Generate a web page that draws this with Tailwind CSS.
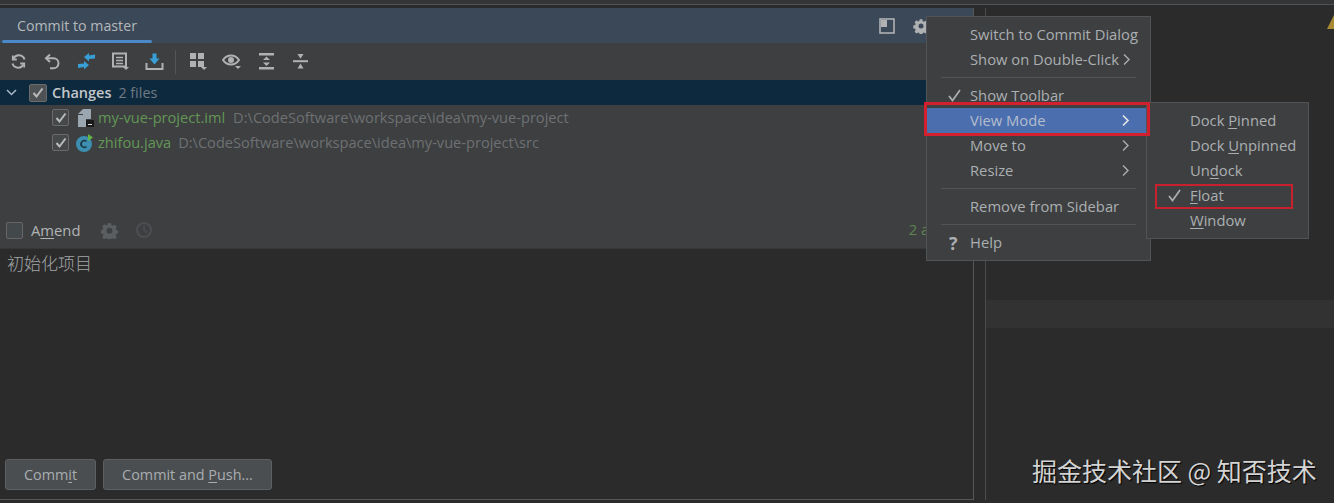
<!DOCTYPE html>
<html>
<head>
<meta charset="utf-8">
<script src="https://cdn.jsdelivr.net/npm/@tailwindcss/browser@4"></script>
</head>
<body class="m-0 bg-[#2b2b2b]">
<div class="relative w-[1334px] h-[503px] overflow-hidden bg-[#2b2b2b] text-[14.6px] text-[#a9adb0] font-['Open_Sans','Noto_Sans_CJK_SC',sans-serif]">
  <div class="h-[5px] bg-[#333537] border-b border-[#505254]"></div>
  <div class="flex h-[495px] pt-[3px]">
    <!-- left commit panel -->
    <section class="flex flex-col w-[974px] h-[492px] border-r border-b border-[#555759]">
      <header class="flex items-center h-[35px] bg-[#3b4858] shrink-0 relative">
        <span class="ml-[17px] mt-[1px] text-[14.2px] text-[#b4b8bb]">Commit to master</span>
        <div class="absolute left-[2px] right-[821px] bottom-0 h-[3px] rounded-full bg-[#4a88c7]"></div>
        <div class="ml-auto flex items-center gap-[18px] mr-[44px]">
          <svg width="16" height="16" viewBox="0 0 16 16" fill="none"><rect x="1" y="1" width="14" height="14" stroke="#afb1b3" stroke-width="1.6"/><rect x="2" y="2" width="6" height="7" fill="#afb1b3"/></svg>
          <svg width="16" height="16" viewBox="0 0 16 16"><path fill="#afb1b3" fill-rule="evenodd" d="M6.6 1h2.8l.4 2 1.3.6 1.8-1.1 2 2-1.1 1.8.5 1.3 2 .4v2.800l-2 .4-.5 1.300 1.100 1.800-2 2-1.800-1.100-1.300.5-.4 2H6.600l-.4-2-1.300-.5-1.800 1.100-2-2 1.100-1.800-.5-1.300-2-.4V7.600l2-.4.5-1.300-1.100-1.800 2-2 1.800 1.100 1.300-.6zM8 5.500a2.700 2.700 0 1 0 0 5.400 2.700 2.700 0 0 0 0-5.400z" transform="translate(0.6 0.4) scale(0.93)"/></svg>
        </div>
      </header>
      <div class="flex-1 flex flex-col bg-[#3e3f41]">
        <!-- toolbar -->
        <div class="flex items-center h-[37px] pl-[1px] shrink-0">
          <div class="flex items-center">
            <span class="flex justify-center w-[34px]"><svg width="17" height="17" viewBox="0 0 17 17" fill="none" stroke="#afb1b3" stroke-width="2"><path d="M14.500 6.500A6 6 0 0 0 3.500 5.500M2.500 10.500A6 6 0 0 0 13.500 11.500"/><path d="M2.800 2.500v4h4M14.200 14.500v-4h-4" stroke-width="1.800"/></svg></span>
            <span class="flex justify-center w-[34px]"><svg width="17" height="17" viewBox="0 0 17 17" fill="none" stroke="#afb1b3" stroke-width="2"><path d="M6 1.500 2 5.300l4 3.700"/><path d="M2.500 5.300h7a5 5 0 0 1 0 10H6"/></svg></span>
            <span class="flex justify-center w-[34px]"><svg width="19" height="19" viewBox="0 0 19 19" fill="#389fd6"><path d="M7 5 12 1V3.500L18 2.500V6.500L12 7V9.500ZM12 13 7 17.500V15L1 16V12L7 11.500V9Z"/></svg></span>
            <span class="flex justify-center w-[34px]"><svg width="19" height="19" viewBox="0 0 19 19" fill="none" stroke="#afb1b3"><path d="M2 1.500h13v13H2z" stroke-width="2"/><path d="M5 5.500h7M5 8.500h7M5 11.500h7" stroke-width="1.500"/><path d="M12 15h6l-3 3z" fill="#afb1b3" stroke="none"/></svg></span>
            <span class="flex justify-center w-[34px]"><svg width="19" height="19" viewBox="0 0 19 19" fill="none"><path d="M1.500 11v6h16v-6" stroke="#afb1b3" stroke-width="2"/><path d="M7.500 1.500h4v5h3l-5 6-5-6h3z" fill="#389fd6"/></svg></span>
          </div>
          <div class="w-px h-[24px] bg-[#515658] ml-[4px] mr-[5px]"></div>
          <div class="flex items-center">
            <span class="flex justify-center w-[34px]"><svg width="19" height="19" viewBox="0 0 19 19" fill="#afb1b3"><rect x="1" y="1" width="6" height="6"/><rect x="9" y="1" width="6" height="6"/><rect x="1" y="9" width="6" height="6"/><rect x="9" y="9" width="6" height="6"/><path d="M12 15h6l-3 3z"/></svg></span>
            <span class="flex justify-center w-[34px]"><svg width="20" height="19" viewBox="0 0 20 19" fill="none"><path d="M1 8c4-6 12-6 16 0-4 6-12 6-16 0z" stroke="#afb1b3" stroke-width="2"/><circle cx="9" cy="8" r="3" fill="#afb1b3"/><path d="M13 14h6l-3 3z" fill="#afb1b3"/></svg></span>
            <span class="flex justify-center w-[34px]"><svg width="17" height="17" viewBox="0 0 17 17" fill="#afb1b3"><rect x="1" y="0" width="15" height="2.500"/><rect x="1" y="14" width="15" height="2.500"/><path d="M8.500 3.500 12 7H5zM8.500 13 5 9.500h7z"/></svg></span>
            <span class="flex justify-center w-[34px]"><svg width="17" height="17" viewBox="0 0 17 17" fill="#afb1b3"><rect x="1" y="7.200" width="15" height="2"/><path d="M5.500 1h6L8.500 5.800zM8.500 10.600 11.500 15.500h-6z"/></svg></span>
          </div>
        </div>
        <!-- changes -->
        <div class="flex items-center h-[25px] bg-[#0d293e] shrink-0">
          <svg class="ml-[6px]" width="11" height="11" viewBox="0 0 11 11" fill="none" stroke="#a9b7c6" stroke-width="1.500"><path d="m1 3 4.500 4.500L10 3"/></svg>
          <span class="flex items-center justify-center ml-[12px] w-[18px] h-[18px] rounded-[2px] border border-[#6b6b6b] bg-[#4f5254]"><svg width="12" height="12" viewBox="0 0 12 12" fill="none" stroke="#bbbbbb" stroke-width="2"><path d="m1.500 6 3 3.500 6-8"/></svg></span>
          <span class="ml-[5px] text-[14.5px] font-semibold text-[#c4c7ca]">Changes</span>
          <span class="ml-[7px] text-[#6f7b85] text-[14.3px]">2 files</span>
        </div>
        <div class="flex items-center h-[25px] pl-[52px] shrink-0">
          <span class="flex items-center justify-center w-[17px] h-[17px] rounded-[2px] border border-[#6b6b6b] bg-[#45494a]"><svg width="12" height="12" viewBox="0 0 12 12" fill="none" stroke="#bbbbbb" stroke-width="2"><path d="m1.500 6 3 3.500 6-8"/></svg></span>
          <svg class="ml-[8px]" width="18" height="18" viewBox="0 0 18 18"><path d="M1 6h5V0h3v18H1z" fill="#9aa7b0"/><path d="M6 0v5H1z" fill="#9aa7b0"/><rect x="9" y="0" width="5" height="10" fill="#9aa7b0"/><rect x="9" y="11" width="8" height="7" fill="#1a1a1a"/><rect x="11" y="15" width="4" height="1" fill="#ddd"/></svg>
          <span class="ml-[3px] text-[#629755]">my-vue-project.iml</span>
          <span class="ml-[8px] text-[#6d7173]">D:\CodeSoftware\workspace\idea\my-vue-project</span>
        </div>
        <div class="flex items-center h-[25px] pl-[52px] shrink-0">
          <span class="flex items-center justify-center w-[17px] h-[17px] rounded-[2px] border border-[#6b6b6b] bg-[#45494a]"><svg width="12" height="12" viewBox="0 0 12 12" fill="none" stroke="#bbbbbb" stroke-width="2"><path d="m1.500 6 3 3.500 6-8"/></svg></span>
          <svg class="ml-[6px]" width="20" height="18" viewBox="0 0 20 18"><circle cx="9" cy="10" r="8" fill="#3c8fb0"/><path d="M11.500 7.500a3.300 3.300 0 1 0 0 5" fill="none" stroke="#1c3340" stroke-width="1.600"/><path d="M13 0l5 3.500-5 3.500z" fill="#62b543"/></svg>
          <span class="ml-[3px] text-[#629755]">zhifou.java</span>
          <span class="ml-[7px] text-[#6d7173]">D:\CodeSoftware\workspace\idea\my-vue-project\src</span>
        </div>
        <div class="flex-1"></div>
        <!-- amend -->
        <div class="flex items-center h-[31px] pl-[6px] pb-[6px] border-b border-[#353739] shrink-0">
          <span class="w-[17px] h-[17px] rounded-[2px] border border-[#666] bg-[#43494a]"></span>
          <span class="ml-[8px] text-[14.8px] text-[#b0b3b5]">A<span class="underline underline-offset-2">m</span>end</span>
          <svg class="ml-[20px]" width="17" height="17" viewBox="0 0 16 16"><path fill="#5a5e60" fill-rule="evenodd" d="M6.600 1h2.800l.4 2 1.300.6 1.800-1.100 2 2-1.100 1.800.5 1.300 2 .4v2.800l-2 .4-.5 1.300 1.100 1.800-2 2-1.800-1.100-1.300.5-.4 2H6.600l-.4-2-1.300-.5-1.800 1.100-2-2 1.100-1.800-.5-1.300-2-.4V7.600l2-.4.5-1.300-1.100-1.800 2-2 1.800 1.100 1.300-.6zM8 5.500a2.700 2.700 0 1 0 0 5.400 2.700 2.700 0 0 0 0-5.400z"/></svg>
          <svg class="ml-[17px]" width="18" height="18" viewBox="0 0 18 18" fill="none" stroke="#4c4f51" stroke-width="2"><circle cx="9" cy="9" r="7"/><path d="M9 4.500V9l3 2.500" stroke-width="1.500"/></svg>
          <span class="ml-auto mr-[44px] text-[#5e8350] whitespace-pre">2 a</span>
        </div>
        <!-- message -->
        <div class="h-[250px] flex flex-col bg-[#2b2b2b] shrink-0">
          <p class="m-0 pl-[7px] pt-[1px] text-[17px] leading-[26px] text-[#a3a6a8] font-['Noto_Sans_CJK_SC',sans-serif] font-light">初始化项目</p>
          <div class="mt-auto mb-[9px] ml-[5px] flex gap-[7px]">
            <button class="w-[91px] h-[31px] pt-[1px] rounded-[3px] border border-[#5c6062] bg-[#4b4e50] text-[#a9adb0] text-[14.4px]">Comm<span class="underline underline-offset-2">i</span>t</button>
            <button class="w-[169px] h-[31px] pt-[1px] rounded-[3px] border border-[#5c6062] bg-[#4b4e50] text-[#a9adb0] text-[14.4px]">Commit and <span class="underline underline-offset-2">P</span>ush...</button>
          </div>
        </div>
      </div>
    </section>
    <!-- right editor -->
    <div class="ml-[11px] flex-1 border-l border-[#4a4c4e] flex flex-col">
      <div class="h-[292px]"></div>
      <div class="h-[28px] bg-[#323232]"></div>
    </div>
  </div>
  <!-- warning triangle -->
  <svg class="absolute left-[1327px] top-[15px]" width="10" height="14" viewBox="0 0 10 14"><path d="M7 0 14 14H0z" fill="#a88a35"/></svg>
  <!-- main menu -->
  <div class="absolute left-[926px] top-[16px] w-[225px] h-[245px] bg-[#3e3f41] border border-[#515456] text-[14.75px] text-[#abafb1]">
    <div class="flex items-center h-[25px] mt-[5px] pl-[43px]">Switch to Commit Dialog</div>
    <div class="flex items-center h-[25px] pl-[43px]">Show on Double-Click<svg class="ml-[3px]" width="9" height="13" viewBox="0 0 9 13" fill="none" stroke="#abafb1" stroke-width="1.400"><path d="m2 1.500 5 5-5 5"/></svg></div>
    <div class="h-px bg-[#515456] mx-[14px] my-[5px]"></div>
    <div class="flex items-center h-[25px] pl-[21px]"><svg class="mr-[9px]" width="13" height="13" viewBox="0 0 13 13" fill="none" stroke="#abafb1" stroke-width="1.700"><path d="m1 7 3.500 4.500L12 1"/></svg>Show Toolbar</div>
    <div class="flex items-center h-[25px] pl-[43px] pr-[20px] bg-[#4b6eaf] text-[#b4bdcc]">View Mode<svg class="ml-auto" width="9" height="13" viewBox="0 0 9 13" fill="none" stroke="#e8e8e8" stroke-width="1.600"><path d="m2 1.500 5 5-5 5"/></svg></div>
    <div class="flex items-center h-[25px] pl-[43px] pr-[20px]">Move to<svg class="ml-auto" width="9" height="13" viewBox="0 0 9 13" fill="none" stroke="#abafb1" stroke-width="1.400"><path d="m2 1.500 5 5-5 5"/></svg></div>
    <div class="flex items-center h-[25px] pl-[43px] pr-[20px]">Resize<svg class="ml-auto" width="9" height="13" viewBox="0 0 9 13" fill="none" stroke="#abafb1" stroke-width="1.400"><path d="m2 1.500 5 5-5 5"/></svg></div>
    <div class="h-px bg-[#515456] mx-[14px] my-[5px]"></div>
    <div class="flex items-center h-[25px] pl-[43px]">Remove from Sidebar</div>
    <div class="h-px bg-[#515456] mx-[14px] my-[5px]"></div>
    <div class="flex items-center h-[25px] pl-[22px]"><span class="w-[21px] text-[18px] font-bold leading-none">?</span>Help</div>
  </div>
  <!-- submenu -->
  <div class="absolute left-[1146px] top-[102px] w-[163px] h-[137px] bg-[#3e3f41] border border-[#515456] pt-[5px] text-[14.75px] text-[#abafb1]">
    <div class="flex items-center h-[25px] pl-[43px] whitespace-pre">Dock <span class="underline underline-offset-2">P</span>inned</div>
    <div class="flex items-center h-[25px] pl-[43px] whitespace-pre">Dock <span class="underline underline-offset-2">U</span>npinned</div>
    <div class="flex items-center h-[25px] pl-[43px]">Un<span class="underline underline-offset-2">d</span>ock</div>
    <div class="flex items-center h-[25px] pl-[21px]"><svg class="mr-[9px]" width="13" height="13" viewBox="0 0 13 13" fill="none" stroke="#abafb1" stroke-width="1.700"><path d="m1 7 3.500 4.500L12 1"/></svg><span class="underline underline-offset-2">F</span>loat</div>
    <div class="flex items-center h-[25px] pl-[43px]"><span class="underline underline-offset-2">W</span>indow</div>
  </div>
  <!-- red annotations -->
  <div class="absolute left-[924px] top-[102px] w-[226px] h-[34px] border-[3px] border-[#d2202f]"></div>
  <div class="absolute left-[1155px] top-[184px] w-[138px] h-[25px] border-2 border-[#c8202d]"></div>
  <!-- watermark -->
  <div class="absolute left-[1032px] top-[453px] text-[25px] leading-[34px] text-[#d4d4d4] whitespace-pre font-['Noto_Sans_CJK_SC',sans-serif] [text-shadow:1px_1px_1px_#000]">掘金技术社区 @ 知否技术</div>
</div>
</body>
</html>
